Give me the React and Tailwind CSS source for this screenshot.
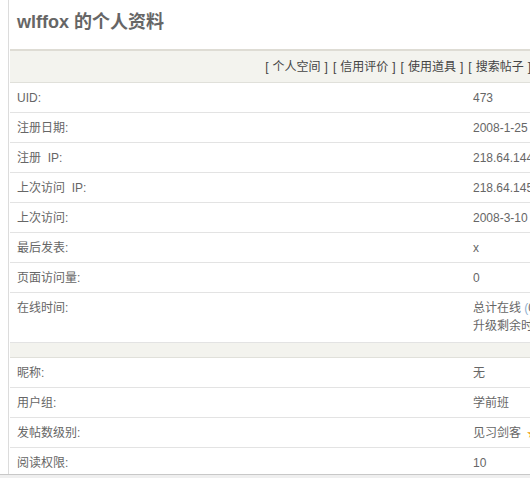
import React from 'react';

const links = ['个人空间', '信用评价', '使用道具', '搜索帖子'];

const groupA = [
    { label: 'UID:', value: '473' },
    { label: '注册日期:', value: '2008-1-25' },
    { label: '注册  IP:', value: '218.64.144.19' },
    { label: '上次访问  IP:', value: '218.64.145.206' },
    { label: '上次访问:', value: '2008-3-10 14:22' },
    { label: '最后发表:', value: 'x' },
    { label: '页面访问量:', value: '0' },
];

const groupB = [
    { label: '昵称:', value: '无' },
    { label: '用户组:', value: '学前班' },
    { label: '发帖数级别:', value: '见习剑客', star: true },
    { label: '阅读权限:', value: '10' },
];

const Row = ({ label, children, tall }) => (
    <div className={`grid shrink-0 grid-cols-[456px_1fr] border-b border-[#e3e3e3] leading-[18px] ${tall ? 'h-[50px] pt-[6px]' : 'h-[30px] pt-[6px]'}`}>
        <div className="pl-[7px] whitespace-pre">{label}</div>
        <div className="pl-[7px] whitespace-nowrap">{children}</div>
    </div>
);

export default function App() {
    return (
        <div className="w-[530px] h-[478px] overflow-hidden bg-white text-[12px] text-[#666]" style={{ fontFamily: '"Liberation Sans", "Noto Sans CJK SC", sans-serif' }}>
            <div className="ml-[8px] flex h-[474px] w-[560px] flex-col overflow-hidden border-l border-[#dcdcdc] pl-[1px]">
                {/* 标题 */}
                <h1 className="h-[49px] shrink-0 pl-[7px] pt-[11px] text-[18px] font-bold leading-[22px] text-[#666]">
                    wlffox 的个人资料
                </h1>

                {/* 链接栏 */}
                <div className="flex h-[34px] shrink-0 items-center justify-end border-t-2 border-b border-t-[#dedcd4] border-b-[#e0e0da] bg-[#f3f3ee] pr-[37px] text-[#444]">
                    {links.map((l) => (
                        <span key={l} className="ml-[5px] flex whitespace-nowrap">
                            <span>[</span>
                            <span className="mx-[4px]">{l}</span>
                            <span>]</span>
                        </span>
                    ))}
                </div>

                {groupA.map((r) => (
                    <Row key={r.label} label={r.label}>{r.value}</Row>
                ))}
                <Row label="在线时间:" tall>
                    <div>总计在线 <span className="text-[#8fb0d0]">(</span>0 小时), 本月在线 0 小时</div>
                    <div>升级剩余时间 10 小时</div>
                </Row>

                {/* 分隔 */}
                <div className="h-[15px] shrink-0 border-b border-[#e0e0da] bg-[#f3f3ee]"></div>

                {groupB.map((r) => (
                    <Row key={r.label} label={r.label}>
                        {r.value}
                        {r.star && <span className="ml-[6px] text-[10px] text-[#f0a020]">★</span>}
                    </Row>
                ))}
            </div>
            <div className="h-[4px] border-t border-[#c8c8c8] bg-[#efefef]"></div>
        </div>
    );
}
